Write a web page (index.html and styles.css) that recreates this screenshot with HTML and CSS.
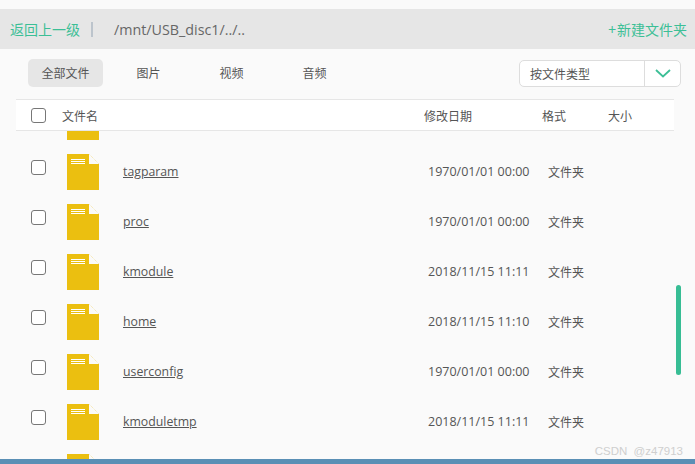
FILE: index.html
```html
<!DOCTYPE html>
<html lang="zh">
<head>
<meta charset="utf-8">
<title>文件管理</title>
<link rel="stylesheet" href="styles.css">
</head>
<body>
<div class="page">
  <header class="pathbar">
    <a class="back">返回上一级</a>
    <span class="sep"></span>
    <span class="path">/mnt/USB_disc1/../..</span>
    <a class="newdir"><span class="plus">+</span>新建文件夹</a>
  </header>
  <nav class="toolbar">
    <div class="tabs">
      <span class="tab active">全部文件</span>
      <span class="tab">图片</span>
      <span class="tab">视频</span>
      <span class="tab">音频</span>
    </div>
    <div class="select">
      <span class="select-label">按文件类型</span>
      <span class="select-btn">
        <svg width="16" height="9" viewBox="0 0 16 9"><path d="M1 1l7 6.500 7-6.500" fill="none" stroke="#3cbf96" stroke-width="1.800"/></svg>
      </span>
    </div>
  </nav>
  <div class="thead">
    <span class="check"></span>
    <span class="h-name">文件名</span>
    <span class="h-date">修改日期</span>
    <span class="h-fmt">格式</span>
    <span class="h-size">大小</span>
  </div>
  <main class="list">
    <div class="rows">
      <div class="row"><span class="check"></span><svg class="folder" viewBox="0 0 32 36"><path d="M0 0h22v10h10v26H0z" fill="#ebbf10"/><path d="M22.500 0.500l9.500 9.500" stroke="#f5e3a0" stroke-width="1" stroke-dasharray="1 1" fill="none"/><path d="M4 5.500h14M4 7.500h14M4 9.500h14" stroke="#fff" stroke-width="1"/></svg><a class="name"></a><span class="date"></span><span class="fmt"></span></div>
      <div class="row"><span class="check"></span><svg class="folder" viewBox="0 0 32 36"><path d="M0 0h22v10h10v26H0z" fill="#ebbf10"/><path d="M22.500 0.500l9.500 9.500" stroke="#f5e3a0" stroke-width="1" stroke-dasharray="1 1" fill="none"/><path d="M4 5.500h14M4 7.500h14M4 9.500h14" stroke="#fff" stroke-width="1"/></svg><a class="name">tagparam</a><span class="date">1970/01/01 00:00</span><span class="fmt">文件夹</span></div>
      <div class="row"><span class="check"></span><svg class="folder" viewBox="0 0 32 36"><path d="M0 0h22v10h10v26H0z" fill="#ebbf10"/><path d="M22.500 0.500l9.500 9.500" stroke="#f5e3a0" stroke-width="1" stroke-dasharray="1 1" fill="none"/><path d="M4 5.500h14M4 7.500h14M4 9.500h14" stroke="#fff" stroke-width="1"/></svg><a class="name">proc</a><span class="date">1970/01/01 00:00</span><span class="fmt">文件夹</span></div>
      <div class="row"><span class="check"></span><svg class="folder" viewBox="0 0 32 36"><path d="M0 0h22v10h10v26H0z" fill="#ebbf10"/><path d="M22.500 0.500l9.500 9.500" stroke="#f5e3a0" stroke-width="1" stroke-dasharray="1 1" fill="none"/><path d="M4 5.500h14M4 7.500h14M4 9.500h14" stroke="#fff" stroke-width="1"/></svg><a class="name">kmodule</a><span class="date">2018/11/15 11:11</span><span class="fmt">文件夹</span></div>
      <div class="row"><span class="check"></span><svg class="folder" viewBox="0 0 32 36"><path d="M0 0h22v10h10v26H0z" fill="#ebbf10"/><path d="M22.500 0.500l9.500 9.500" stroke="#f5e3a0" stroke-width="1" stroke-dasharray="1 1" fill="none"/><path d="M4 5.500h14M4 7.500h14M4 9.500h14" stroke="#fff" stroke-width="1"/></svg><a class="name">home</a><span class="date">2018/11/15 11:10</span><span class="fmt">文件夹</span></div>
      <div class="row"><span class="check"></span><svg class="folder" viewBox="0 0 32 36"><path d="M0 0h22v10h10v26H0z" fill="#ebbf10"/><path d="M22.500 0.500l9.500 9.500" stroke="#f5e3a0" stroke-width="1" stroke-dasharray="1 1" fill="none"/><path d="M4 5.500h14M4 7.500h14M4 9.500h14" stroke="#fff" stroke-width="1"/></svg><a class="name">userconfig</a><span class="date">1970/01/01 00:00</span><span class="fmt">文件夹</span></div>
      <div class="row"><span class="check"></span><svg class="folder" viewBox="0 0 32 36"><path d="M0 0h22v10h10v26H0z" fill="#ebbf10"/><path d="M22.500 0.500l9.500 9.500" stroke="#f5e3a0" stroke-width="1" stroke-dasharray="1 1" fill="none"/><path d="M4 5.500h14M4 7.500h14M4 9.500h14" stroke="#fff" stroke-width="1"/></svg><a class="name">kmoduletmp</a><span class="date">2018/11/15 11:11</span><span class="fmt">文件夹</span></div>
      <div class="row"><span class="check"></span><svg class="folder" viewBox="0 0 32 36"><path d="M0 0h22v10h10v26H0z" fill="#ebbf10"/><path d="M22.500 0.500l9.500 9.500" stroke="#f5e3a0" stroke-width="1" stroke-dasharray="1 1" fill="none"/><path d="M4 5.500h14M4 7.500h14M4 9.500h14" stroke="#fff" stroke-width="1"/></svg><a class="name"></a><span class="date"></span><span class="fmt"></span></div>
    </div>
    <div class="scrollbar"></div>
  </main>
  <footer class="bottom"></footer>
  <div class="watermark">CSDN <span class="handle">@z47913</span></div>
</div>
</body>
</html>
```
FILE: styles.css
```css
* { box-sizing: border-box; }
html, body { margin: 0; padding: 0; }
body {
  background: #fafafa;
  font-family: "Noto Sans CJK SC", "Open Sans", sans-serif;
  font-size: 12px;
  color: #555;
}
.page {
  position: relative;
  width: 695px;
  height: 464px;
  padding-top: 9px;
  display: flex;
  flex-direction: column;
  overflow: hidden;
}
.pathbar {
  height: 40px;
  flex: none;
  background: #e6e6e6;
  display: flex;
  align-items: center;
  padding: 0 8px 0 10px;
  font-size: 14px;
}
.back, .newdir { color: #3cbf96; }
.plus { margin-right: 1px; }
.sep {
  width: 2px;
  height: 15px;
  margin: 0 21px 0 11px;
  background: #bcc4cc;
}
.path { font-family: "Open Sans", sans-serif; font-size: 14.300px; color: #666; }
.newdir { margin-left: auto; }
.toolbar {
  height: 50px;
  flex: none;
  display: flex;
  align-items: flex-start;
  justify-content: space-between;
  padding: 10px 14px 0 28px;
}
.tabs { display: flex; }
.tab {
  width: 75px;
  height: 28px;
  margin-right: 8px;
  line-height: 28px;
  text-align: center;
  border-radius: 5px;
}
.tab.active { background: #e6e6e6; }
.select {
  width: 162px;
  height: 27px;
  margin-top: 1px;
  display: flex;
  background: #fff;
  border: 1px solid #ddd;
  border-radius: 5px;
}
.select-label { flex: 1; padding-left: 10px; line-height: 25px; }
.select-btn {
  width: 36px;
  border-left: 1px solid #ddd;
  display: flex;
  align-items: center;
  justify-content: center;
}
.thead {
  width: 658px;
  height: 32px;
  flex: none;
  margin-left: 16px;
  background: #fff;
  border-top: 1px solid #e6e6e6;
  border-bottom: 1px solid #e6e6e6;
  display: flex;
  align-items: center;
  padding-left: 15px;
}
.check {
  flex: none;
  width: 15px;
  height: 15px;
  background: #fff;
  border: 1px solid #777;
  border-radius: 3px;
}
.h-name { margin-left: 16px; width: 362px; }
.h-date { width: 118px; }
.h-fmt { width: 66px; }
.list {
  position: relative;
  flex: 1;
  overflow: hidden;
}
.rows { margin-top: -27px; }
.row {
  height: 50px;
  display: flex;
  align-items: flex-start;
  padding-left: 31px;
}
.row .check { margin-top: 6px; }
.folder {
  flex: none;
  width: 32px;
  height: 36px;
  margin-left: 21px;
}
.name {
  width: 306px;
  margin-left: 24px;
  padding-top: 9px;
  font-family: "Open Sans", sans-serif;
  font-size: 12.300px;
  color: #555;
  text-decoration: underline;
}
.date {
  width: 119px;
  margin-left: -1px;
  padding-top: 9px;
  font-family: "Open Sans", sans-serif;
  font-size: 12.500px;
  white-space: nowrap;
}
.fmt { margin-left: 1px; padding-top: 9px; }
.scrollbar {
  position: absolute;
  left: 676px;
  top: 154px;
  width: 5px;
  height: 90px;
  border-radius: 3px;
  background: #37bd94;
}
.bottom {
  height: 5px;
  flex: none;
  background: #5a8fb5;
}
.watermark {
  position: absolute;
  right: 12px;
  bottom: 7px;
  font-family: "Liberation Sans", sans-serif;
  font-size: 11.500px;
  color: #cfcfcf;
}
.handle { margin-left: 3px; }
```
